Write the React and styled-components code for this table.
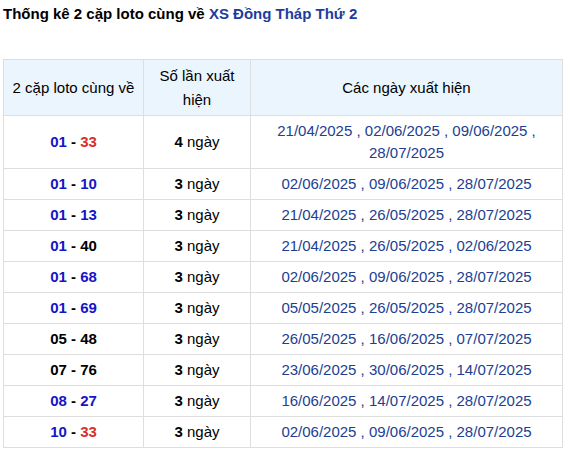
import React from 'react';
import { createGlobalStyle, styled } from 'styled-components';

const GlobalStyle = createGlobalStyle`
  body {
    margin: 0;
    background: #fff;
    font-family: "Liberation Sans", Arial, sans-serif;
    color: #000;
  }
`;

const Page = styled.div`
  padding: 3px 9px 0 3px;
`;

const Title = styled.h3`
  margin: 0;
  font-size: 15px;
  font-weight: bold;
  line-height: 20px;
  padding-top: 1px;
  height: 55px;
  span { color: #1c3d9c; }
`;

const Table = styled.table`
  width: 100%;
  border-collapse: collapse;
  font-size: 15px;
  text-align: center;
  border: 1px solid #dedede;
`;

const Th = styled.th`
  background: #eaf5fe;
  font-weight: normal;
  border: 1px solid #dedede;
  padding: 3px 6px;
  line-height: 24px;
  height: 56px;
  box-sizing: border-box;
  width: ${p => p.$w || 'auto'};
`;

const Td = styled.td`
  border: 1px solid #dedede;
  padding: 4px 6px;
  line-height: 22px;
  color: ${p => p.$color || '#000'};
`;

const Num = styled.b`
  color: ${p => p.$red ? '#d6302f' : p.$blue ? '#1515c8' : '#000'};
`;

const Dash = styled.b``;

const blueSet = new Set(['01', '10', '13', '68', '69', '08', '27']);
const redSet = new Set(['33']);

const rows = [
  ['01', '33', 4, '21/04/2025 , 02/06/2025 , 09/06/2025 , 28/07/2025'],
  ['01', '10', 3, '02/06/2025 , 09/06/2025 , 28/07/2025'],
  ['01', '13', 3, '21/04/2025 , 26/05/2025 , 28/07/2025'],
  ['01', '40', 3, '21/04/2025 , 26/05/2025 , 02/06/2025'],
  ['01', '68', 3, '02/06/2025 , 09/06/2025 , 28/07/2025'],
  ['01', '69', 3, '05/05/2025 , 26/05/2025 , 28/07/2025'],
  ['05', '48', 3, '26/05/2025 , 16/06/2025 , 07/07/2025'],
  ['07', '76', 3, '23/06/2025 , 30/06/2025 , 14/07/2025'],
  ['08', '27', 3, '16/06/2025 , 14/07/2025 , 28/07/2025'],
  ['10', '33', 3, '02/06/2025 , 09/06/2025 , 28/07/2025'],
];

function Pair({ a, b }) {
  return (
    <>
      <Num $blue={blueSet.has(a)} $red={redSet.has(a)}>{a}</Num>
      <Dash> - </Dash>
      <Num $blue={blueSet.has(b)} $red={redSet.has(b)}>{b}</Num>
    </>
  );
}

export default function App() {
  return (
    <>
      <GlobalStyle />
      <Page>
        <Title>Thống kê 2 cặp loto cùng về <span>XS Đồng Tháp Thứ 2</span></Title>
        <Table>
          <thead>
            <tr>
              <Th $w="140px">2 cặp loto cùng về</Th>
              <Th $w="107px">Số lần xuất hiện</Th>
              <Th>Các ngày xuất hiện</Th>
            </tr>
          </thead>
          <tbody>
            {rows.map(([a, b, n, dates]) => (
              <tr key={a + b}>
                <Td><Pair a={a} b={b} /></Td>
                <Td><b>{n}</b> ngày</Td>
                <Td $color="#213e92">{dates}</Td>
              </tr>
            ))}
          </tbody>
        </Table>
      </Page>
    </>
  );
}
